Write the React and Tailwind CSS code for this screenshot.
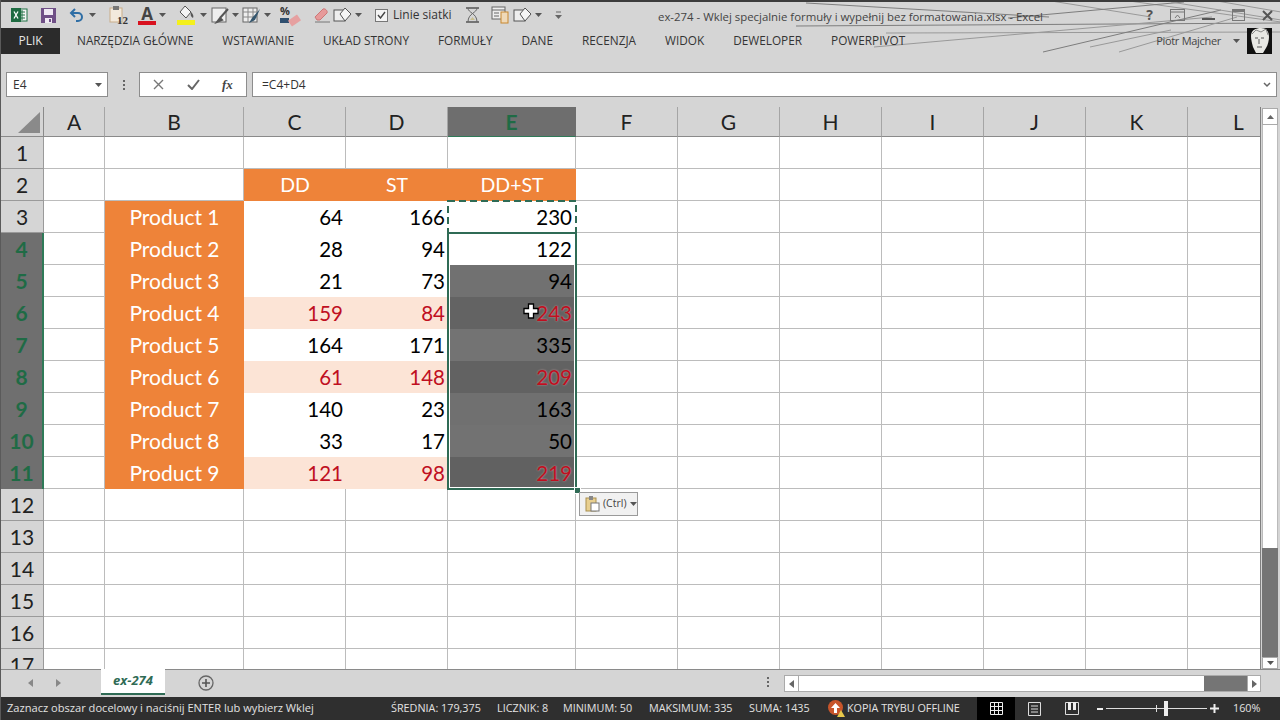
import React from "react";

const columns = ["A", "B", "C", "D", "E", "F", "G", "H", "I", "J", "K", "L"];

const products = [
  { row: 3, name: "Product 1", dd: 64, st: 166, sum: 230 },
  { row: 4, name: "Product 2", dd: 28, st: 94, sum: 122 },
  { row: 5, name: "Product 3", dd: 21, st: 73, sum: 94, fill: "bg-[#717171]" },
  { row: 6, name: "Product 4", dd: 159, st: 84, sum: 243, low: true, fill: "bg-[#636363]" },
  { row: 7, name: "Product 5", dd: 164, st: 171, sum: 335, fill: "bg-[#737373]" },
  { row: 8, name: "Product 6", dd: 61, st: 148, sum: 209, low: true, fill: "bg-[#626262]" },
  { row: 9, name: "Product 7", dd: 140, st: 23, sum: 163, fill: "bg-[#707070]" },
  { row: 10, name: "Product 8", dd: 33, st: 17, sum: 50, fill: "bg-[#727272]" },
  { row: 11, name: "Product 9", dd: 121, st: 98, sum: 219, low: true, fill: "bg-[#616161]" },
];

const straws = [
  [805, 3, 1048, 17], [1044, 0, 1150, 17], [1121, 0, 1280, 22], [795, 26, 1280, 23],
  [873, 47, 1211, 17], [885, 33, 1280, 32], [1042, 52, 1220, 10], [1089, 47, 1170, 30],
  [1118, 52, 1236, 17], [1007, 18, 1183, 2], [1170, 2, 1280, 20], [1210, 0, 1280, 12],
];

const Caret = ({ className = "" }) => (
  <svg width="7" height="4" viewBox="0 0 7 4" className={`shrink-0 ${className}`}>
    <path d="M0 0h7L3.500 4z" fill="#555" />
  </svg>
);

const Slot = ({ w, children }) => (
  <div className={`flex items-center justify-center shrink-0 ${w}`}>{children}</div>
);

const ShapesIcon = () => (
  <svg width="20" height="18" viewBox="0 0 20 18" fill="none" className="shrink-0">
    <rect x="1" y="4" width="11" height="11" fill="#eee" stroke="#555" />
    <path d="M12 2l6 6-6 7-5-7z" fill="#f5f5f5" stroke="#555" />
  </svg>
);

const QuickAccess = () => (
  <div className="flex items-center h-full pl-[9px]">
    <Slot w="w-[18px]">
      <svg width="17" height="16" viewBox="0 0 17 16">
        <rect x="6" y="2" width="10" height="12" fill="#f4f4f4" stroke="#217346" />
        <path d="M8 5h6M8 8h6M8 11h6M11 3v10" stroke="#217346" />
        <rect x="0" y="1" width="10" height="14" fill="#1e6b41" />
        <path d="M3 4.500l4 7M7 4.500l-4 7" stroke="#fff" strokeWidth="1.300" />
      </svg>
    </Slot>
    <Slot w="w-[40px]">
      <svg width="15" height="15" viewBox="0 0 15 15">
        <rect width="15" height="15" fill="#6f4f86" />
        <rect x="3" y="1" width="9" height="6" fill="#efe9f3" />
        <rect x="4" y="10" width="7" height="5" fill="#efe9f3" />
        <rect x="8" y="11" width="2" height="3" fill="#6f4f86" />
      </svg>
    </Slot>
    <Slot w="w-[18px]">
      <svg width="16" height="14" viewBox="0 0 16 14" fill="none">
        <path d="M6 1L2 5l4 4" stroke="#2f6ea5" strokeWidth="2" />
        <path d="M2 5h7a4 4 0 010 8H7" stroke="#2f6ea5" strokeWidth="2" />
      </svg>
    </Slot>
    <Slot w="w-[12px]"><Caret /></Slot>
    <Slot w="w-[40px]">
      <div className="relative w-[18px] h-[20px]">
        <svg width="15" height="18" viewBox="0 0 15 18">
          <rect x="1" y="3" width="12" height="14" fill="#f2e9dc" stroke="#c9ad8a" />
          <rect x="4" y="1" width="6" height="4" fill="#777" />
        </svg>
        <span className="absolute right-[-1px] bottom-[-1px] text-[11px] leading-none font-bold text-[#333] font-['Liberation_Serif',serif]">12</span>
      </div>
    </Slot>
    <Slot w="w-[18px]">
      <div className="flex flex-col items-center w-[18px]">
        <span className="text-[17px] leading-[15px] font-bold text-[#444] font-['Open_Sans',sans-serif]">A</span>
        <div className="w-[18px] h-[4px] bg-[#d8121f]" />
      </div>
    </Slot>
    <Slot w="w-[13px]"><Caret /></Slot>
    <Slot w="w-[30px]">
      <svg width="18" height="20" viewBox="0 0 18 20" className="ml-[4px]">
        <path d="M8 1l6 6-5 6-6-6z" fill="#f4f4f4" stroke="#555" />
        <path d="M14 7c2 2 3 4 2 6-2-1-3-3-2-6z" fill="#555" />
        <rect x="0" y="15" width="18" height="5" fill="#f4f01c" />
      </svg>
    </Slot>
    <Slot w="w-[9px]"><Caret /></Slot>
    <Slot w="w-[24px]">
      <svg width="19" height="18" viewBox="0 0 19 18" fill="none">
        <rect x="1" y="2" width="14" height="14" fill="#eee" stroke="#666" />
        <path d="M17 3L9 12M9 12l-3 4 5-2z" stroke="#555" strokeWidth="2" />
      </svg>
    </Slot>
    <Slot w="w-[6px]"><Caret /></Slot>
    <Slot w="w-[26px]">
      <svg width="19" height="18" viewBox="0 0 19 18" fill="none">
        <rect x="1" y="2" width="14" height="14" fill="#eee" stroke="#666" />
        <path d="M1 6h14M1 11h14M6 2v14M11 2v14" stroke="#888" />
        <path d="M18 3l-8 9-3 5 6-3z" fill="#35566e" />
      </svg>
    </Slot>
    <Slot w="w-[6px]"><Caret /></Slot>
    <Slot w="w-[40px]">
      <div className="relative w-[20px] h-[18px]">
        <span className="absolute left-0 top-[-3px] text-[11px] font-bold text-[#333] font-['Open_Sans',sans-serif]">%</span>
        <div className="absolute left-0 bottom-[1px] w-[9px] h-[5px] bg-[#2f4f6f]" />
        <div className="absolute right-0 bottom-0 w-[11px] h-[7px] -rotate-[35deg] bg-[#e6a0a0]" />
      </div>
    </Slot>
    <Slot w="w-[24px]">
      <svg width="18" height="16" viewBox="0 0 18 16">
        <path d="M2 10l8-8c2-1 5 2 4 4l-7 7H4z" fill="#e79a9a" stroke="#c77" />
        <path d="M2 15h15" stroke="#777" />
      </svg>
    </Slot>
    <Slot w="w-[18px]"><ShapesIcon /></Slot>
    <Slot w="w-[12px]"><Caret /></Slot>
    <Slot w="w-[34px]">
      <div className="w-[13px] h-[13px] border border-[#777] bg-[#f4f4f4] flex items-center justify-center">
        <svg width="9" height="8" viewBox="0 0 9 8" fill="none"><path d="M1 4l2.500 3L8 1" stroke="#444" strokeWidth="1.400" /></svg>
      </div>
    </Slot>
    <span className="-ml-[5px] w-[63px] shrink-0 whitespace-nowrap text-[12px] text-[#333] font-['Open_Sans',sans-serif]">Linie siatki</span>
    <Slot w="w-[32px]">
      <svg width="13" height="16" viewBox="0 0 13 16" fill="none">
        <path d="M0 1h13M0 15h13" stroke="#555" strokeWidth="1.600" />
        <path d="M2 1c0 5 9 5 9 14M11 1c0 5-9 5-9 14" stroke="#666" />
        <path d="M4 13h5l-2.500-3z" fill="#c9bf8f" />
      </svg>
    </Slot>
    <Slot w="w-[24px]">
      <svg width="19" height="18" viewBox="0 0 19 18" fill="none">
        <rect x="1" y="1" width="13" height="12" fill="#eee" stroke="#666" />
        <path d="M1 4h13M3 7h5M3 10h5" stroke="#666" />
        <rect x="10" y="6" width="7" height="11" fill="#efd9b8" stroke="#c8872f" />
      </svg>
    </Slot>
    <Slot w="w-[22px]"><ShapesIcon /></Slot>
    <Slot w="w-[8px]"><Caret /></Slot>
    <Slot w="w-[32px]">
      <svg width="7" height="8" viewBox="0 0 7 8"><path d="M1 1h5" stroke="#666" /><path d="M0 4h7L3.500 8z" fill="#666" /></svg>
    </Slot>
  </div>
);

const Avatar = () => (
  <svg width="25" height="26" viewBox="0 0 25 26">
    <rect width="25" height="26" fill="#111" />
    <path d="M4 8C4 2 9 0 14 0s8 3 8 9c0 3-1 8-3 11l-3 5H9l-3-6C5 15 4 12 4 8z" fill="#e8e8e4" />
    <path d="M8 10h3M14 10h3M12 11v5M10 19h5" stroke="#555" />
    <path d="M5 6l4-4 5 2 5-3 2 6" stroke="#888" fill="none" />
  </svg>
);

const WindowControls = () => (
  <div className="flex items-center gap-[17px] pr-[7px] text-[#555]">
    <span className="text-[14px] font-bold leading-none font-['Open_Sans',sans-serif]">?</span>
    <svg width="15" height="12" viewBox="0 0 15 12" fill="none"><rect x=".5" y=".5" width="14" height="11" stroke="#777" /><path d="M1 3h13" stroke="#777" /><path d="M5 9l2.500-3L10 9" stroke="#777" /></svg>
    <div className="w-[13px] h-[2px] bg-[#555] mt-[7px]" />
    <svg width="13" height="12" viewBox="0 0 13 12" fill="none"><rect x=".5" y=".5" width="12" height="11" stroke="#777" /><path d="M1 2h11" stroke="#777" strokeWidth="2" /></svg>
    <svg width="11" height="11" viewBox="0 0 11 11"><path d="M1 1l9 9M10 1l-9 9" stroke="#555" strokeWidth="2" /></svg>
  </div>
);

const TitleBar = () => (
  <div className="relative h-[54px] shrink-0">
    <svg width="1280" height="54" className="absolute left-0 top-0" fill="none">
      {straws.map(([x1, y1, x2, y2], i) => (
        <line key={i} x1={x1} y1={y1} x2={x2} y2={y2} stroke={i % 3 === 0 ? "#7d7d7d" : "#999"} />
      ))}
    </svg>
    <div className="relative flex items-center h-[28px] border-t-2 border-[#3c3c3c]">
      <QuickAccess />
      <span className="absolute left-[657px] top-[6px] text-[11.4px] whitespace-nowrap text-[#444] font-['Open_Sans',sans-serif]">
        ex-274 - Wklej specjalnie formuły i wypełnij bez formatowania.xlsx - Excel
      </span>
      <div className="ml-auto"><WindowControls /></div>
    </div>
    <div className="relative flex items-center h-[26px] text-[11.8px] text-[#333] font-['Open_Sans',sans-serif]">
      <div className="flex items-center justify-center w-[59px] h-full bg-[#2b2b2b] text-[12px] text-[#e6e6e6]">PLIK</div>
      <span className="ml-[17px]">NARZĘDZIA GŁÓWNE</span>
      <span className="ml-[29px]">WSTAWIANIE</span>
      <span className="ml-[29px]">UKŁAD STRONY</span>
      <span className="ml-[29px]">FORMUŁY</span>
      <span className="ml-[29px]">DANE</span>
      <span className="ml-[29px]">RECENZJA</span>
      <span className="ml-[29px]">WIDOK</span>
      <span className="ml-[29px]">DEWELOPER</span>
      <span className="ml-[29px]">POWERPIVOT</span>
      <div className="ml-auto flex items-center pr-[8px]">
        <span className="text-[11px] tracking-[-0.3px] text-[#444]">Piotr Majcher</span>
        <Caret className="ml-[12px] mr-[7px]" />
        <Avatar />
      </div>
    </div>
  </div>
);

const FormulaBar = () => (
  <div className="flex items-stretch h-[25px] mt-[18px] mb-[10px] shrink-0 pl-[5px] pr-[3px] font-['Open_Sans',sans-serif] text-[12px] text-[#333]">
    <div className="flex items-center justify-between w-[102px] bg-white border border-[#8d8d8d] pl-[6px] pr-[5px]">
      E4
      <Caret />
    </div>
    <div className="flex flex-col items-center justify-center gap-[2px] w-[31px]">
      <div className="w-[2px] h-[2px] bg-[#666]" />
      <div className="w-[2px] h-[2px] bg-[#666]" />
      <div className="w-[2px] h-[2px] bg-[#666]" />
    </div>
    <div className="flex items-center justify-around w-[108px] bg-white border border-[#8d8d8d] px-[2px]">
      <svg width="11" height="11" viewBox="0 0 11 11"><path d="M1 1l9 9M10 1l-9 9" stroke="#777" strokeWidth="1.400" /></svg>
      <svg width="13" height="11" viewBox="0 0 13 11" fill="none"><path d="M1 6l4 4 7-9" stroke="#666" strokeWidth="2" /></svg>
      <span className="text-[13px] italic font-bold text-[#444] font-['Liberation_Serif',serif]">fx</span>
    </div>
    <div className="flex items-center justify-between flex-1 ml-[5px] bg-white border border-[#8d8d8d] pl-[9px] pr-[5px]">
      =C4+D4
      <svg width="8" height="6" viewBox="0 0 8 6" fill="none"><path d="M1 1l3 3 3-3" stroke="#666" strokeWidth="1.500" /></svg>
    </div>
  </div>
);

const HeaderCell = ({ label }) => {
  const active = label === "E";
  return (
    <div
      className={`flex items-center justify-center h-[30px] border-r border-b text-[21px] ${
        active
          ? "bg-[#6e6e6e] text-[#1f6b45] font-bold border-r-[#6e6e6e] border-b-[#2f7a58]"
          : "text-[#222] border-r-[#a5a5a5] border-b-[#8a8a8a]"
      }`}
    >
      {label}
    </div>
  );
};

const RowHeader = ({ n }) => {
  const active = n >= 4 && n <= 11;
  return (
    <div
      className={`flex items-center justify-center h-[32px] text-[21px] ${
        active
          ? "bg-[#6f6f6f] text-[#1f6b45] font-bold border-r-2 border-[#2f7a58]"
          : "text-[#222] border-r border-b border-[#9a9a9a]"
      }`}
    >
      {n}
    </div>
  );
};

const Blank = () => <div className="h-[32px] bg-white border-r border-b border-[#bcbcbc]" />;

const Num = ({ value, low }) => (
  <div
    className={`flex items-center justify-end h-[32px] pr-[3px] text-[20.5px] ${
      low ? "bg-[#fce4d6] text-[#c00f1f]" : "bg-white text-black"
    }`}
  >
    {value}
  </div>
);

const SumCell = ({ item }) => (
  <div
    className={`flex items-center justify-end h-[32px] pr-[4px] text-[20.5px] ${item.fill || "bg-white"} ${
      item.low ? "text-[#c00f1f] [text-shadow:0_0_2px_rgba(255,200,200,0.6)]" : "text-black"
    }`}
  >
    {item.sum}
  </div>
);

const BlankTail = () => (
  <>
    <Blank />
    <Blank />
    <Blank />
    <Blank />
    <Blank />
    <Blank />
    <Blank />
  </>
);

const SheetGrid = () => (
  <div className="relative flex-1 overflow-hidden border-r border-[#808080] font-['Lato',sans-serif]">
    <div className="grid grid-cols-[43px_61px_139px_102px_102px_128px_102px_102px_102px_102px_102px_102px_102px] bg-white">
      <div className="relative h-[30px] bg-[#d5d5d5] border-r border-b border-[#8a8a8a]">
        <div className="absolute right-[3px] bottom-[3px] w-0 h-0 border-l-[22px] border-l-transparent border-b-[21px] border-b-[#8a8a8a]" />
      </div>
      {columns.map((c) => (
        <div key={c} className="bg-[#d5d5d5]"><HeaderCell label={c} /></div>
      ))}

      <div className="bg-[#d5d5d5]"><RowHeader n={1} /></div>
      <Blank /><Blank /><Blank /><Blank /><Blank /><BlankTail />

      <div className="bg-[#d5d5d5]"><RowHeader n={2} /></div>
      <Blank /><Blank />
      <div className="flex items-center justify-center h-[32px] bg-[#ee8339] text-white text-[19.5px]">DD</div>
      <div className="flex items-center justify-center h-[32px] bg-[#ee8339] text-white text-[19.5px]">ST</div>
      <div className="flex items-center justify-center h-[32px] bg-[#ee8339] text-white text-[19.5px]">DD+ST</div>
      <BlankTail />

      {products.map((p) => (
        <React.Fragment key={p.row}>
          <div className="bg-[#d5d5d5]"><RowHeader n={p.row} /></div>
          <Blank />
          <div className="flex items-center justify-center h-[32px] bg-[#ee8339] text-white text-[21px]">{p.name}</div>
          <Num value={p.dd} low={p.low} />
          <Num value={p.st} low={p.low} />
          <SumCell item={p} />
          <BlankTail />
        </React.Fragment>
      ))}

      {[12, 13, 14, 15, 16, 17].map((n) => (
        <React.Fragment key={n}>
          <div className="bg-[#d5d5d5]"><RowHeader n={n} /></div>
          <Blank /><Blank /><Blank /><Blank /><Blank /><BlankTail />
        </React.Fragment>
      ))}
    </div>

    {/* marching ants on the copied cell */}
    <svg width="130" height="34" viewBox="0 0 130 34" fill="none" className="absolute left-[446px] top-[93px]">
      <rect x="1" y="1" width="128" height="32" stroke="#2f6b55" strokeWidth="2" strokeDasharray="7 4" />
    </svg>
    {/* selection E4:E11 */}
    <div className="absolute left-[446px] top-[125px] w-[130px] h-[258px] border-2 border-[#2f6b55]">
      <div className="w-full h-full border border-white" />
    </div>
    <div className="absolute left-[573px] top-[380px] w-[5px] h-[5px] bg-[#2f6b55] border border-white box-content" />

    {/* cursor */}
    <svg width="16" height="16" viewBox="0 0 16 16" className="absolute left-[522px] top-[196px]">
      <path d="M5.500 1h5v4.500H15v5h-4.500V15h-5v-4.500H1v-5h4.500z" fill="#fff" stroke="#000" strokeWidth="1.300" />
    </svg>

    {/* paste options */}
    <div className="absolute left-[578px] top-[385px] flex items-center gap-[3px] w-[59px] h-[24px] pl-[5px] bg-[#f1f1f1] border border-[#9a9a9a] font-['Open_Sans',sans-serif] text-[10.5px] text-[#444]">
      <svg width="15" height="16" viewBox="0 0 15 16">
        <rect x="1" y="2" width="10" height="13" fill="#e8cf8f" stroke="#a98f4f" />
        <rect x="4" y="0" width="4" height="4" fill="#888" />
        <rect x="6" y="7" width="8" height="8" fill="#fff" stroke="#777" />
      </svg>
      (Ctrl)
      <Caret />
    </div>
  </div>
);

const VerticalScroll = () => (
  <div className="flex flex-col w-[19px] pl-[1px] pr-[2px] pt-[1px] shrink-0">
    <div className="flex items-center justify-center h-[17px] bg-white border border-[#aaa]">
      <svg width="7" height="4" viewBox="0 0 7 4"><path d="M0 4h7L3.500 0z" fill="#666" /></svg>
    </div>
    <div className="h-[423px] bg-white border-x border-[#bbb]" />
    <div className="h-[109px] bg-[#757575]" />
    <div className="flex items-center justify-center h-[12px] bg-white border border-[#aaa]"><Caret /></div>
  </div>
);

const TabBar = () => (
  <div className="flex items-start h-[28px] shrink-0 border-t border-[#8a8a8a]">
    <svg width="5" height="8" viewBox="0 0 5 8" className="ml-[27px] mt-[9px]"><path d="M5 0v8L0 4z" fill="#888" /></svg>
    <svg width="5" height="8" viewBox="0 0 5 8" className="ml-[23px] mt-[9px]"><path d="M0 0v8l5-4z" fill="#888" /></svg>
    <div className="flex items-center justify-center ml-[40px] w-[64px] h-[26px] -mt-[1px] bg-white border-b-2 border-[#2f6b55] text-[13px] font-bold italic text-[#2f6b55] font-['Open_Sans',sans-serif]">
      ex-274
    </div>
    <svg width="16" height="16" viewBox="0 0 16 16" fill="none" className="ml-[33px] mt-[5px]">
      <circle cx="8" cy="8" r="7" stroke="#666" strokeWidth="1.300" />
      <path d="M8 4v8M4 8h8" stroke="#555" strokeWidth="1.600" />
    </svg>
    <div className="flex flex-col gap-[2px] ml-[553px] mt-[7px]">
      <div className="w-[2px] h-[2px] bg-[#666]" />
      <div className="w-[2px] h-[2px] bg-[#666]" />
      <div className="w-[2px] h-[2px] bg-[#666]" />
    </div>
    <div className="flex items-stretch ml-[15px] mt-[5px] w-[477px] h-[17px] border border-[#aaa] bg-white">
      <div className="flex items-center justify-center w-[14px] border-r border-[#aaa]">
        <svg width="5" height="8" viewBox="0 0 5 8"><path d="M5 0v8L0 4z" fill="#666" /></svg>
      </div>
      <div className="w-[405px]" />
      <div className="w-[43px] bg-[#757575]" />
      <div className="flex flex-1 items-center justify-center border-l border-[#aaa]">
        <svg width="5" height="8" viewBox="0 0 5 8"><path d="M0 0v8l5-4z" fill="#666" /></svg>
      </div>
    </div>
  </div>
);

const StatusBar = () => (
  <div className="flex items-center h-[23px] shrink-0 bg-[#2f2f2f] text-[10.8px] text-[#e2e2e2] whitespace-nowrap font-['Open_Sans',sans-serif]">
    <span className="ml-[6px] w-[384px] text-[11.1px]">Zaznacz obszar docelowy i naciśnij ENTER lub wybierz Wklej</span>
    <span className="w-[106px]">ŚREDNIA: 179,375</span>
    <span className="w-[66px]">LICZNIK: 8</span>
    <span className="w-[86px]">MINIMUM: 50</span>
    <span className="w-[100px]">MAKSIMUM: 335</span>
    <span className="w-[79px]">SUMA: 1435</span>
    <div className="relative w-[19px] h-[17px]">
      <div className="w-[15px] h-[15px] rounded-full bg-[#c8552b] flex items-center justify-center">
        <svg width="9" height="10" viewBox="0 0 9 10"><path d="M4.500 0L9 5H6v5H3V5H0z" fill="#fff" /></svg>
      </div>
      <svg width="8" height="7" viewBox="0 0 8 7" className="absolute right-[2px] bottom-0"><path d="M4 0l4 7H0z" fill="#e8c84a" /></svg>
    </div>
    <span className="w-[130px]">KOPIA TRYBU OFFLINE</span>
    <div className="flex items-center justify-center w-[38px] h-full bg-black">
      <svg width="13" height="13" viewBox="0 0 13 13" fill="none"><path d="M.5.500h12v12H.5zM.5 4.500h12M.5 8.500h12M4.500.500v12M8.500.500v12" stroke="#eee" /></svg>
    </div>
    <div className="flex items-center justify-center w-[38px]">
      <svg width="13" height="14" viewBox="0 0 13 14" fill="none"><path d="M.5.500h12v13H.5z" stroke="#ddd" /><path d="M3 4h7M3 7h7M3 10h7" stroke="#ddd" /></svg>
    </div>
    <div className="flex items-center justify-center w-[38px]">
      <svg width="14" height="13" viewBox="0 0 14 13" fill="none"><path d="M.5.500h13v12H.5z" stroke="#ddd" /><path d="M3 0h3v8H3zM8 0h3v8H8z" fill="#eee" /></svg>
    </div>
    <div className="flex items-center ml-[6px] w-[126px] h-full">
      <div className="w-[6px] h-[2px] bg-[#eee]" />
      <div className="relative ml-[3px] w-[101px] h-[1px] bg-[#ddd]">
        <div className="absolute left-[50px] top-[-3px] w-[1px] h-[7px] bg-[#ddd]" />
        <div className="absolute left-[58px] top-[-7px] w-[4px] h-[15px] bg-[#eee]" />
      </div>
      <svg width="9" height="9" viewBox="0 0 9 9" className="ml-[3px]"><path d="M4.500 0v9M0 4.500h9" stroke="#eee" strokeWidth="2" /></svg>
    </div>
    <span className="ml-[10px]">160%</span>
  </div>
);

export default function App() {
  return (
    <div className="flex flex-col w-[1280px] h-[720px] overflow-hidden bg-[#d5d5d5] border-l border-[#5a5a5a]">
      <TitleBar />
      <FormulaBar />
      <div className="flex h-[562px] shrink-0">
        <SheetGrid />
        <VerticalScroll />
      </div>
      <TabBar />
      <StatusBar />
    </div>
  );
}
